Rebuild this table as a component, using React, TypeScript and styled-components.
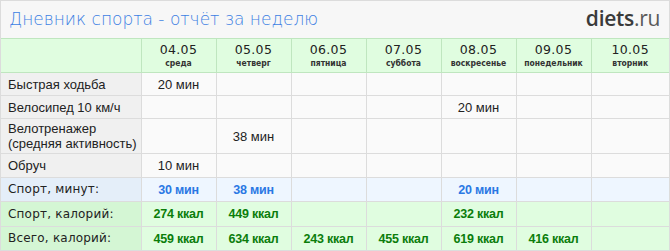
import React from "react";
import styled, { createGlobalStyle } from "styled-components";

const GlobalStyle = createGlobalStyle`
  html, body {
    margin: 0;
    padding: 0;
    background: #ffffff;
  }
`;

type Day = { date: string; name: string };

const days: Day[] = [
  { date: "04.05", name: "среда" },
  { date: "05.05", name: "четверг" },
  { date: "06.05", name: "пятница" },
  { date: "07.05", name: "суббота" },
  { date: "08.05", name: "воскресенье" },
  { date: "09.05", name: "понедельник" },
  { date: "10.05", name: "вторник" },
];

const activities: { label: string[]; values: (string | null)[]; h: number }[] = [
  { label: ["Быстрая ходьба"], values: ["20 мин", null, null, null, null, null, null], h: 22 },
  { label: ["Велосипед 10 км/ч"], values: [null, null, null, null, "20 мин", null, null], h: 22 },
  {
    label: ["Велотренажер", "(средняя активность)"],
    values: [null, "38 мин", null, null, null, null, null],
    h: 34,
  },
  { label: ["Обруч"], values: ["10 мин", null, null, null, null, null, null], h: 23 },
];

const minutes = ["30 мин", "38 мин", "", "", "20 мин", "", ""];
const sportKcal = ["274 ккал", "449 ккал", "", "", "232 ккал", "", ""];
const totalKcal = ["459 ккал", "634 ккал", "243 ккал", "455 ккал", "619 ккал", "416 ккал", ""];

type Tone = "plain" | "blue" | "green";

const Widget = styled.div`
  width: 670px;
  height: 251px;
  box-sizing: border-box;
  border: 1px solid #dcdcdc;
  background: #f7f7f7;
  overflow: hidden;
`;

const TitleBar = styled.div`
  display: flex;
  align-items: center;
  justify-content: space-between;
  height: 37px;
  padding: 0 9px 0 8px;
`;

const Title = styled.div`
  font-family: "DejaVu Sans", sans-serif;
  font-weight: 200;
  font-size: 17px;
  color: #3d7fe3;
  margin-top: -2px;
`;

const Logo = styled.div`
  font-family: "Open Sans", "Noto Sans", sans-serif;
  font-size: 21px;
  color: #3a3a3a;
  margin-top: -4px;
  letter-spacing: -0.3px;
  b {
    font-weight: 600;
  }
  span {
    font-weight: 400;
    color: #5a5a5a;
  }
`;

const Table = styled.table`
  width: 668px;
  border-collapse: collapse;
  table-layout: fixed;
`;

const HeadCell = styled.th`
  height: 33px;
  padding: 0;
  background: #e0fde0;
  border: 1px solid #bfe6bf;
  text-align: center;
  vertical-align: middle;
  &:first-child {
    border-left: none;
  }
  &:last-child {
    border-right: none;
  }
`;

const DateText = styled.div`
  font-family: "DejaVu Sans", sans-serif;
  font-weight: normal;
  font-size: 12.5px;
  color: #222;
  line-height: 15px;
  letter-spacing: 0.3px;
`;

const DayName = styled.div`
  font-family: "DejaVu Sans Condensed", "DejaVu Sans", sans-serif;
  font-weight: bold;
  font-size: 8.5px;
  color: #333;
  line-height: 12px;
`;

const toneBg: Record<Tone, [string, string]> = {
  plain: ["#f0f0f0", "#fafafa"],
  blue: ["#e4eef9", "#eef6ff"],
  green: ["#d4f6d4", "#e0fde0"],
};

const LabelCell = styled.td<{ $tone: Tone; $h: number; $summary?: boolean }>`
  height: ${(p) => p.$h}px;
  padding: 0 0 0 7px;
  background: ${(p) => toneBg[p.$tone][0]};
  border: 1px solid #dcdcdc;
  border-left: none;
  font-family: ${(p) => (p.$summary ? '"DejaVu Sans", sans-serif' : '"Liberation Sans", Arial, sans-serif')};
  font-size: ${(p) => (p.$summary ? "12px" : "13px")};
  letter-spacing: ${(p) => (p.$summary ? "0.2px" : "0")};
  line-height: 15px;
  color: #222;
  vertical-align: middle;
`;

const ValueCell = styled.td<{ $tone: Tone; $bold?: boolean }>`
  padding: 0;
  background: ${(p) => toneBg[p.$tone][1]};
  border: 1px solid #dcdcdc;
  text-align: center;
  vertical-align: middle;
  font-family: "Liberation Sans", Arial, sans-serif;
  font-size: ${(p) => (p.$bold ? "12.5px" : "13px")};
  font-weight: ${(p) => (p.$bold ? "bold" : "normal")};
  letter-spacing: ${(p) => (p.$bold ? "-0.2px" : "0")};
  color: ${(p) => (p.$tone === "blue" ? "#2a78e4" : p.$tone === "green" ? "#0b7d0b" : "#222")};
  &:last-child {
    border-right: none;
  }
`;

const SummaryRow = ({ label, values, tone, h }: { label: string; values: string[]; tone: Tone; h: number }) => (
  <tr>
    <LabelCell $tone={tone} $h={h} $summary>
      {label}
    </LabelCell>
    {values.map((v, i) => (
      <ValueCell key={i} $tone={tone} $bold>
        {v}
      </ValueCell>
    ))}
  </tr>
);

export default function App() {
  return (
    <>
      <GlobalStyle />
      <Widget>
        <TitleBar>
          <Title>Дневник спорта - отчёт за неделю</Title>
          <Logo>
            <b>diets</b>
            <span>.ru</span>
          </Logo>
        </TitleBar>
        <Table>
          <colgroup>
            <col style={{ width: 140 }} />
            {days.map((d, i) => (
              <col key={d.date} style={{ width: i === days.length - 1 ? 78 : 75 }} />
            ))}
          </colgroup>
          <thead>
            <tr>
              <HeadCell />
              {days.map((d) => (
                <HeadCell key={d.date}>
                  <DateText>{d.date}</DateText>
                  <DayName>{d.name}</DayName>
                </HeadCell>
              ))}
            </tr>
          </thead>
          <tbody>
            {activities.map((a) => (
              <tr key={a.label[0]}>
                <LabelCell $tone="plain" $h={a.h}>
                  {a.label.map((l, i) => (
                    <React.Fragment key={l}>
                      {i > 0 && <br />}
                      {l}
                    </React.Fragment>
                  ))}
                </LabelCell>
                {a.values.map((v, i) => (
                  <ValueCell key={i} $tone="plain">
                    {v}
                  </ValueCell>
                ))}
              </tr>
            ))}
            <SummaryRow label="Спорт, минут:" values={minutes} tone="blue" h={23} />
            <SummaryRow label="Спорт, калорий:" values={sportKcal} tone="green" h={24} />
            <SummaryRow label="Всего, калорий:" values={totalKcal} tone="green" h={23} />
          </tbody>
        </Table>
      </Widget>
    </>
  );
}
